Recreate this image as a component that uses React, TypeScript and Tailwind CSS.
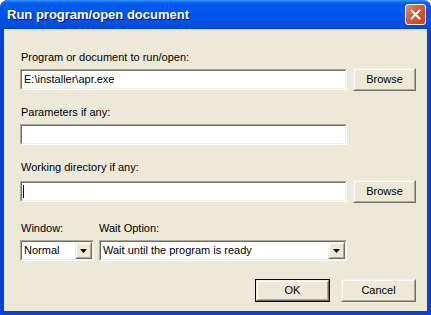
import React from "react";

const font = "font-['Liberation_Sans',Arial,sans-serif]";

function Sunken({ className = "", children }: { className?: string; children?: React.ReactNode }) {
  return (
    <div
      className={`border border-t-[#aca899] border-l-[#aca899] border-b-white border-r-white ${className}`}
    >
      <div className="h-full border border-t-[#716f64] border-l-[#716f64] border-b-[#f1efe2] border-r-[#f1efe2] bg-white flex items-center">
        {children}
      </div>
    </div>
  );
}

function Raised({ className = "", children }: { className?: string; children?: React.ReactNode }) {
  return (
    <div
      className={`border border-t-[#f1efe2] border-l-[#f1efe2] border-b-[#716f64] border-r-[#716f64] ${className}`}
    >
      <div className="h-full border border-t-white border-l-white border-b-[#aca899] border-r-[#aca899] bg-[#ece9d8] flex items-center justify-center">
        {children}
      </div>
    </div>
  );
}

function Button({ label, isDefault }: { label: string; isDefault?: boolean }) {
  if (isDefault) {
    return (
      <div className="w-[75px] h-[23px] border border-black">
        <Raised className="h-full">
          <span className="text-[11px] text-black">{label}</span>
        </Raised>
      </div>
    );
  }
  return (
    <Raised className="w-[75px] h-[23px]">
      <span className="text-[11px] text-black">{label}</span>
    </Raised>
  );
}

function Select({ value, className }: { value: string; className: string }) {
  return (
    <Sunken className={`h-[21px] ${className}`}>
      <span className="flex-1 pl-[2px] text-[11px] text-black whitespace-nowrap overflow-hidden">{value}</span>
      <Raised className="w-[17px] h-full">
        <svg width="7" height="4" viewBox="0 0 7 4">
          <path d="M0 0h7L3.5 4z" fill="#000" />
        </svg>
      </Raised>
    </Sunken>
  );
}

function Label({ text, className = "" }: { text: string; className?: string }) {
  return <div className={`h-[13px] leading-[13px] text-[11px] text-black ${className}`}>{text}</div>;
}

export default function App() {
  return (
    <div className={`w-[431px] h-[315px] bg-white ${font}`}>
      <div className="w-full h-full flex flex-col rounded-t-[8px] overflow-hidden bg-[#0842d8]">
        {/* Title bar */}
        <div className="h-[29px] shrink-0 flex items-center pl-[7px] pr-[5px] bg-[linear-gradient(180deg,#3d95ff_0%,#0a66f5_8%,#0058ee_20%,#0055e8_55%,#004fe0_85%,#0043cf_100%)]">
          <span className="flex-1 text-white font-bold text-[13px] [text-shadow:1px_1px_0_#0a1883]">
            Run program/open document
          </span>
          <div className="w-[21px] h-[21px] rounded-[3px] border border-white bg-[linear-gradient(135deg,#f08a6c_0%,#e05a36_40%,#c8401c_100%)] flex items-center justify-center">
            <svg width="11" height="11" viewBox="0 0 11 11">
              <path d="M1.5 1.5l8 8M9.5 1.5l-8 8" stroke="#fff" strokeWidth="2" strokeLinecap="square" />
            </svg>
          </div>
        </div>

        {/* Client area */}
        <div className="flex-1 mx-[4px] mb-[4px] bg-[#ece9d8] pl-[16px] pr-[11px] pt-[22px] flex flex-col">
          <Label text="Program or document to run/open:" className="pl-[1px]" />
          <div className="mt-[4px] flex items-center gap-[6px] h-[23px]">
            <Sunken className="w-[327px] h-[21px]">
              <span className="pl-[2px] text-[11px] text-black">E:\installer\apr.exe</span>
            </Sunken>
            <Raised className="w-[63px] h-[23px]">
              <span className="text-[11px] text-black">Browse</span>
            </Raised>
          </div>

          <Label text="Parameters if any:" className="mt-[15px] pl-[1px]" />
          <Sunken className="mt-[5px] w-[327px] h-[21px]" />

          <Label text="Working directory if any:" className="mt-[16px] pl-[1px]" />
          <div className="mt-[6px] flex items-center gap-[6px] h-[23px]">
            <Sunken className="w-[327px] h-[21px]">
              <span className="ml-[1px] w-[1px] h-[13px] bg-black" />
            </Sunken>
            <Raised className="w-[63px] h-[23px]">
              <span className="text-[11px] text-black">Browse</span>
            </Raised>
          </div>

          <div className="mt-[19px] flex gap-[5px]">
            <div className="w-[74px] flex flex-col">
              <Label text="Window:" className="pl-[1px]" />
              <Select value="Normal" className="mt-[5px] w-[74px]" />
            </div>
            <div className="w-[248px] flex flex-col">
              <Label text="Wait Option:" />
              <Select value="Wait until the program is ready" className="mt-[5px] w-[248px]" />
            </div>
          </div>

          <div className="mt-[18px] flex justify-end gap-[11px]">
            <Button label="OK" isDefault />
            <Button label="Cancel" />
          </div>
        </div>
      </div>
    </div>
  );
}
